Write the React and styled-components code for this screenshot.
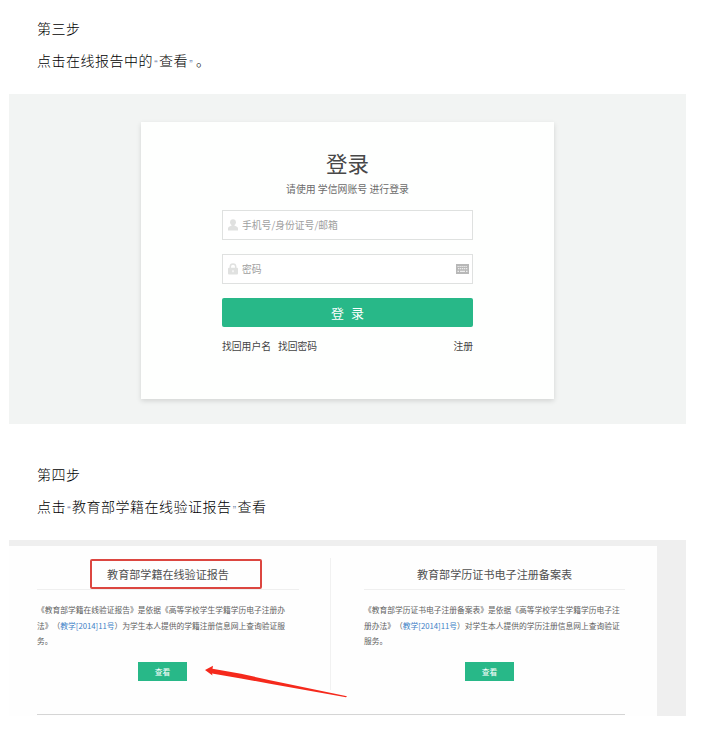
import React from 'react';
import styled, { createGlobalStyle } from 'styled-components';

function Step({title, children}) {
    return (
        <StepStyled>
            <p>{title}</p>
            <p>{children}</p>
        </StepStyled>
    )
}

function Report({title, lines, marked, width}) {
    return (
        <ReportStyled $width={width}>
            <ReportTitle>
                {title}
                {marked && <RedFrame />}
            </ReportTitle>
            <ReportText>
                {lines.map((line, i) => <div key={i}>{line}</div>)}
            </ReportText>
            <ViewButton>查看</ViewButton>
        </ReportStyled>
    )
}

function UserIcon() {
    return (
        <svg width="10" height="12" viewBox="0 0 10 12" fill="#e0e1e0">
            <circle cx="5" cy="3.2" r="2.9" />
            <path d="M3.6 5h2.8v1.6l2.6 1.2q1 .6 1 1.8V11.500H0V9.6q0-1.2 1-1.8l2.6-1.2z" />
        </svg>
    )
}

function LockIcon() {
    return (
        <svg width="10" height="12" viewBox="0 0 10 12">
            <path d="M2.3 5.5V3.6a2.7 2.7 0 0 1 5.4 0v1.9" fill="none" stroke="#e0e1e0" strokeWidth="1.5" />
            <rect x="0" y="4.8" width="10" height="6.7" rx="1" fill="#e0e1e0" />
            <path d="M5 7.2v2" stroke="#fff" strokeWidth="1.2" />
        </svg>
    )
}

function KeyboardIcon() {
    return (
        <svg width="13" height="10" viewBox="0 0 13 10">
            <rect width="13" height="10" fill="#b8b8b8" />
            <path d="M1.5 2.5h10M2 4.7h10" stroke="#ececec" strokeWidth="1.2" strokeDasharray="1.3 .7" />
            <path d="M1.5 7.3h1.5M4 7.3h5M10 7.3h1.5" stroke="#ececec" strokeWidth="1.2" />
        </svg>
    )
}

function App() {
    return (
        <Page>
            <GlobalStyle />
            <Step title="第三步">
                点击在线报告中的<Quote>“</Quote>查看<Quote>”</Quote><Stop>。</Stop>
            </Step>
            <LoginFigure>
                <LoginCard>
                    <h1>登录</h1>
                    <Hint>请使用 学信网账号 进行登录</Hint>
                    <Field><UserIcon /><span>手机号/身份证号/邮箱</span></Field>
                    <Field><LockIcon /><span>密码</span><KeyboardIcon /></Field>
                    <LoginButton>登 录</LoginButton>
                    <Links>
                        <a>找回用户名</a>
                        <a>找回密码</a>
                        <a>注册</a>
                    </Links>
                </LoginCard>
            </LoginFigure>
            <Step title="第四步">
                点击<Quote>“</Quote>教育部学籍在线验证报告<Quote>”</Quote>查看
            </Step>
            <ReportFigure>
                <Sheet>
                    <Reports>
                        <Report
                            marked
                            width={262}
                            title="教育部学籍在线验证报告"
                            lines={[
                                '《教育部学籍在线验证报告》是依据《高等学校学生学籍学历电子注册办',
                                <>法》（<b>教学[2014]11号</b>）为学生本人提供的学籍注册信息网上查询验证服</>,
                                '务。',
                            ]}
                        />
                        <Divider />
                        <Report
                            width={261}
                            title="教育部学历证书电子注册备案表"
                            lines={[
                                '《教育部学历证书电子注册备案表》是依据《高等学校学生学籍学历电子注',
                                <>册办法》（<b>教学[2014]11号</b>）对学生本人提供的学历注册信息网上查询验证</>,
                                '服务。',
                            ]}
                        />
                    </Reports>
                </Sheet>
                <Arrow width="144" height="34" viewBox="0 0 144 34">
                    <path d="M0 5L8 .8L7.500 3.800L36 8.800L65 15.200L142 31.300L141 32.300L65 18.800L36 13.400L7 8.500L7.500 10.500Z" fill="#f5291c" />
                </Arrow>
            </ReportFigure>
        </Page>
    )
}

const GlobalStyle = createGlobalStyle`
    body{
        margin: 0;
        background: #fff;
        font-family: "Noto Sans CJK SC", sans-serif;
        text-spacing-trim: space-all;
    }
    p, h1{
        margin: 0;
        font-weight: 400;
    }
    p{
        font-weight: 300;
    }
`;

const Page = styled.div`
    width: 702px;
    height: 734px;
    overflow: hidden;
    box-sizing: border-box;
    padding: 12px 16px 0 9px;
`;

const StepStyled = styled.div`
    padding-left: 28px;
    font-size: 14px;
    letter-spacing: 0.5px;
    line-height: 32px;
    color: #000;
    white-space: nowrap;
`;

const Quote = styled.span`
    display: inline-block;
    width: 6px;
    line-height: 1;
    text-align: center;
    letter-spacing: 0;
    font-family: "Liberation Sans", sans-serif;
    font-size: 10px;
    font-weight: 400;
    vertical-align: -2px;
    color: #6f83a8;
`;

const Stop = styled.span`
    margin-left: 2px;
`;

const LoginFigure = styled.div`
    display: flex;
    justify-content: center;
    box-sizing: border-box;
    width: 677px;
    height: 330px;
    margin: 18px 0 34px;
    padding-top: 28px;
    background: #f2f4f3;
`;

const LoginCard = styled.div`
    box-sizing: border-box;
    width: 413px;
    height: 277px;
    padding: 25px 81px 0;
    background: #fefffe;
    box-shadow: 0 2px 5px rgba(0, 0, 0, 0.13);
    h1{
        font-size: 21.5px;
        line-height: 31px;
        text-align: center;
        color: #484848;
    }
`;

const Hint = styled.div`
    margin: 2px 0 12px;
    font-size: 9.9px;
    line-height: 18px;
    text-align: center;
    color: #6b6b6b;
`;

const Field = styled.div`
    display: flex;
    align-items: center;
    box-sizing: border-box;
    height: 30px;
    margin-bottom: 14px;
    padding: 0 3px 0 5px;
    border: 1px solid #dfe1e0;
    background: #fff;
    font-size: 9.8px;
    color: #a0a0a0;
    span{
        flex: 1;
        margin-left: 4px;
    }
`;

const LoginButton = styled.div`
    height: 29px;
    border-radius: 2px;
    background: #28b888;
    font-size: 13px;
    line-height: 30px;
    text-align: center;
    word-spacing: 4px;
    color: #fff;
`;

const Links = styled.div`
    display: flex;
    gap: 7px;
    margin-top: 10px;
    font-size: 9.8px;
    line-height: 18px;
    color: #444;
    a:last-child{
        margin-left: auto;
    }
`;

const ReportFigure = styled.div`
    position: relative;
    box-sizing: border-box;
    width: 677px;
    height: 176px;
    margin-top: 18px;
    padding-top: 6px;
    background: #efefef;
`;

const Sheet = styled.div`
    box-sizing: border-box;
    width: 648px;
    height: 170px;
    padding: 12px 32px 0 28px;
    background: #fefefe;
`;

const Reports = styled.div`
    display: flex;
    box-sizing: border-box;
    height: 157px;
    border-bottom: 1px solid #d5d5d5;
`;

const Divider = styled.div`
    width: 1px;
    height: 132px;
    margin: 0 33px 0 31px;
    background: #f1f1f1;
`;

const ReportStyled = styled.div`
    flex: none;
    width: ${props => props.$width}px;
`;

const ReportTitle = styled.div`
    position: relative;
    height: 31px;
    border-bottom: 1px solid #efefef;
    font-size: 11.08px;
    line-height: 32px;
    text-align: center;
    color: #505050;
`;

const RedFrame = styled.i`
    position: absolute;
    top: 1px;
    left: 53px;
    box-sizing: border-box;
    width: 172px;
    height: 30px;
    border: 2px solid #dc4640;
    border-radius: 2px;
`;

const ReportText = styled.div`
    height: 47px;
    margin-top: 12px;
    font-size: 7.75px;
    line-height: 15.5px;
    white-space: nowrap;
    color: #606060;
    b{
        font-weight: 400;
        color: #3b80c6;
    }
`;

const ViewButton = styled.div`
    width: 49px;
    height: 19px;
    margin: 13px 0 0 101px;
    background: #28b888;
    font-size: 7.75px;
    line-height: 19px;
    text-align: center;
    color: #fff;
`;

const Arrow = styled.svg`
    position: absolute;
    top: 125px;
    left: 196px;
`;

export default App;
